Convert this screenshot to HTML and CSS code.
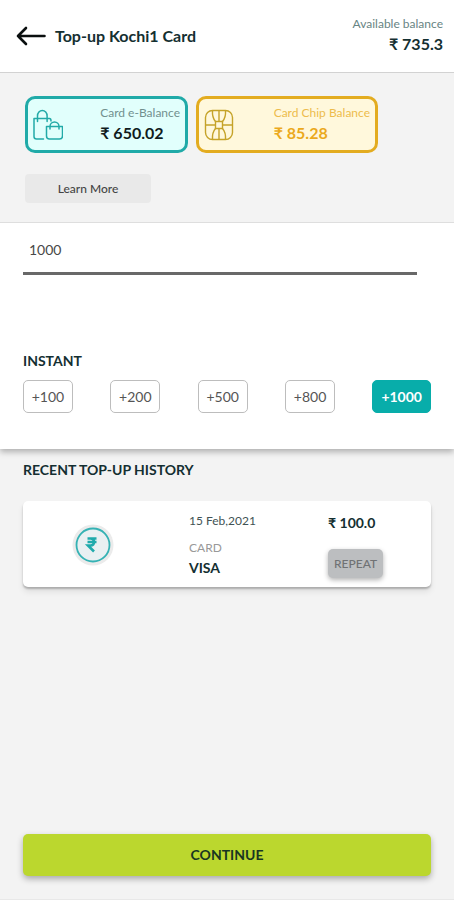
FILE: index.html
```html
<!DOCTYPE html>
<html lang="en">
<head>
<meta charset="utf-8">
<meta name="viewport" content="width=device-width, initial-scale=1">
<title>Top-up Kochi1 Card</title>
<link rel="stylesheet" href="styles.css">
</head>
<body>
<header class="topbar">
  <a class="back" href="#" aria-label="Back">
    <svg width="30" height="20" viewBox="0 0 30 20" fill="none" stroke="#0a0f0f" stroke-width="2.6" stroke-linecap="round" stroke-linejoin="round"><path d="M28.500 10H2M10 2L2 10l8 8"/></svg>
  </a>
  <h1 class="title">Top-up Kochi1 Card</h1>
  <div class="available">
    <span class="available-label">Available balance</span>
    <strong class="available-value">₹ 735.3</strong>
  </div>
</header>
<main class="content">
  <section class="balances">
    <div class="cards">
      <div class="balance balance-teal">
        <svg width="30" height="32" viewBox="0 0 30 32" fill="none" stroke="#22aaa8" stroke-width="1.500" stroke-linecap="round" stroke-linejoin="round"><path d="M10.500 30H3.500Q1 30 1 27.500V9.500h15.500q1.500 0 1.500 2.500M4.500 12.500V7a4.800 5.500 0 0 1 9.600 0v5.500M13.500 17.500h16V27q0 3-3 3h-10q-3 0-3-3zM17 20v-2.500a4.500 4.500 0 0 1 9 0V20"/></svg>
        <div class="balance-text">
          <span class="balance-label">Card e-Balance</span>
          <strong class="balance-value">₹ 650.02</strong>
        </div>
      </div>
      <div class="balance balance-gold">
        <svg width="30" height="32" viewBox="0 0 30 32" fill="none" stroke="#c5a329" stroke-width="1.400" stroke-linejoin="round"><rect x="1.500" y="1.500" width="27" height="29" rx="7"/><rect x="11.500" y="12.500" width="7" height="7"/><path d="M1.500 16h10M18.500 16h10M15 1.500v11M15 19.500v11M8.500 1.500q-.5 7 3 11M21.500 1.500q.5 7-3 11M8.500 30.500q-.5-7 3-11M21.500 30.500q.5-7-3-11"/></svg>
        <div class="balance-text">
          <span class="balance-label">Card Chip Balance</span>
          <strong class="balance-value">₹ 85.28</strong>
        </div>
      </div>
    </div>
    <button class="learn" type="button">Learn More</button>
  </section>
  <section class="topup">
    <input class="amount" type="text" inputmode="numeric" value="1000" aria-label="Top-up amount">
    <h2 class="heading">INSTANT</h2>
    <div class="chips">
      <button class="chip" type="button">+100</button>
      <button class="chip" type="button">+200</button>
      <button class="chip" type="button">+500</button>
      <button class="chip" type="button">+800</button>
      <button class="chip chip-active" type="button" aria-pressed="true">+1000</button>
    </div>
  </section>
  <section class="history">
    <h2 class="heading">RECENT TOP-UP HISTORY</h2>
    <article class="entry">
      <div class="entry-icon">
        <svg width="42" height="42" viewBox="0 0 42 42" fill="none"><circle cx="21" cy="21" r="20.500" fill="#ebebeb"/><circle cx="21" cy="21" r="16.500" fill="#e9f0f2" stroke="#35b2b4" stroke-width="1.800"/><path d="M15.500 14.500h9M15.500 18h9M16 14.500h2.500q3.500 0 3.500 3.500t-3.500 3.500H16l6 6" stroke="#20aaac" stroke-width="2.600"/></svg>
      </div>
      <div class="entry-info">
        <time class="entry-date" datetime="2021-02-15">15 Feb,2021</time>
        <span class="entry-kind">CARD</span>
        <strong class="entry-method">VISA</strong>
      </div>
      <div class="entry-side">
        <strong class="entry-amount">₹ 100.0</strong>
        <button class="repeat" type="button">REPEAT</button>
      </div>
    </article>
  </section>
</main>
<footer class="footer">
  <button class="continue" type="button">CONTINUE</button>
</footer>
</body>
</html>
```
FILE: styles.css
```css
* {
  box-sizing: border-box;
}

body {
  display: flex;
  flex-direction: column;
  min-height: 100vh;
  margin: 0;
  background: #f3f3f3;
  color: #142f31;
  font-family: Lato, "Noto Sans", sans-serif;
  font-size: 14px;
  line-height: 20px;
}

button,
input {
  font: inherit;
}

.topbar {
  display: flex;
  align-items: center;
  gap: 9px;
  padding: 14px 11px 18px 16px;
  background: #fff;
  border-bottom: 1px solid #d2d2d2;
}

.back {
  display: flex;
  padding-top: 3px;
}

.title {
  flex: 1;
  margin: 0;
  padding-top: 3px;
  font-size: 16px;
  font-weight: 700;
}

.available {
  display: flex;
  flex-direction: column;
  align-items: flex-end;
}

.available-label {
  color: #688483;
  font-size: 12px;
}

.available-value {
  font-size: 16px;
}

.balances {
  padding: 23px 25px 19px;
  border-bottom: 1px solid #dedede;
}

.cards {
  display: flex;
  gap: 8px;
}

.balance {
  display: flex;
  justify-content: space-between;
  align-items: center;
  height: 57px;
  padding: 0 5px;
  border: 3px solid;
  border-radius: 10px;
}

.balance-teal {
  flex: 0 1 163px;
  background: #e1fffc;
  border-color: #20aaa8;
}

.balance-gold {
  flex: 0 1 182px;
  background: #fff8dc;
  border-color: #e3ac20;
  color: #eba91c;
}

.balance-text {
  display: flex;
  flex-direction: column;
  padding-bottom: 4px;
}

.balance-label {
  color: #71908e;
  font-size: 12px;
}

.balance-gold .balance-label {
  color: #edbc4c;
}

.balance-value {
  font-size: 16px;
}

.balance-teal .balance-value {
  color: #101c1d;
}

.learn {
  display: block;
  width: 126px;
  height: 29px;
  margin-top: 21px;
  padding: 0;
  background: #e9e9e9;
  border: 0;
  border-radius: 4px;
  color: #454545;
  font-size: 12px;
  font-weight: 500;
}

.topup {
  padding: 11px 23px 36px;
  background: #fff;
  box-shadow: 0 3px 6px rgb(0 0 0 / 28%);
  clip-path: inset(0 0 -12px);
}

.amount {
  display: block;
  width: calc(100% - 14px);
  height: 41px;
  margin-bottom: 76px;
  padding: 0 6px 8px;
  background: none;
  border: 0;
  border-bottom: 3px solid #686868;
  color: #484848;
}

.heading {
  margin: 0;
  font-size: 14px;
  font-weight: 700;
}

.chips {
  display: flex;
  justify-content: space-between;
  margin-top: 9px;
}

.chip {
  min-width: 50px;
  height: 33px;
  padding: 0 7px;
  background: #fff;
  border: 1px solid #bdbdbd;
  border-radius: 5px;
  color: #555;
}

.chip-active {
  padding: 0 8px;
  background: #08adaa;
  border-color: #08adaa;
  color: #fff;
  font-weight: 700;
}

.history {
  padding: 11px 23px 24px;
}

.entry {
  display: grid;
  grid-template-columns: 140fr 139fr 103fr;
  margin-top: 21px;
  padding: 10px 0 9px 26px;
  background: #fff;
  border-radius: 5px;
  box-shadow: 0 2px 2px rgb(0 0 0 / 24%), 0 5px 6px rgb(0 0 0 / 8%);
}

.entry-icon {
  display: flex;
  align-items: center;
  padding-left: 23px;
}

.entry-info {
  display: flex;
  flex-direction: column;
}

.entry-date {
  margin-bottom: 7px;
  color: #415254;
  font-size: 12px;
}

.entry-kind {
  color: #999;
  font-size: 12px;
}

.entry-side {
  display: flex;
  flex-direction: column;
  align-items: flex-start;
  gap: 16px;
  padding-top: 2px;
}

.repeat {
  height: 29px;
  padding: 0 6px;
  background: #bcbec0;
  border: 0;
  border-radius: 5px;
  box-shadow: 0 2px 5px rgb(0 0 0 / 30%);
  color: #707274;
  font-size: 12px;
  font-weight: 500;
}

.footer {
  margin-top: auto;
  padding: 0 23px 23px;
  border-bottom: 1px solid #e8e8e8;
}

.continue {
  display: block;
  width: 100%;
  height: 42px;
  background: #bbd72e;
  border: 0;
  border-radius: 5px;
  box-shadow: 0 3px 6px rgb(0 0 0 / 30%);
  color: #183622;
  font-weight: 700;
}
```
